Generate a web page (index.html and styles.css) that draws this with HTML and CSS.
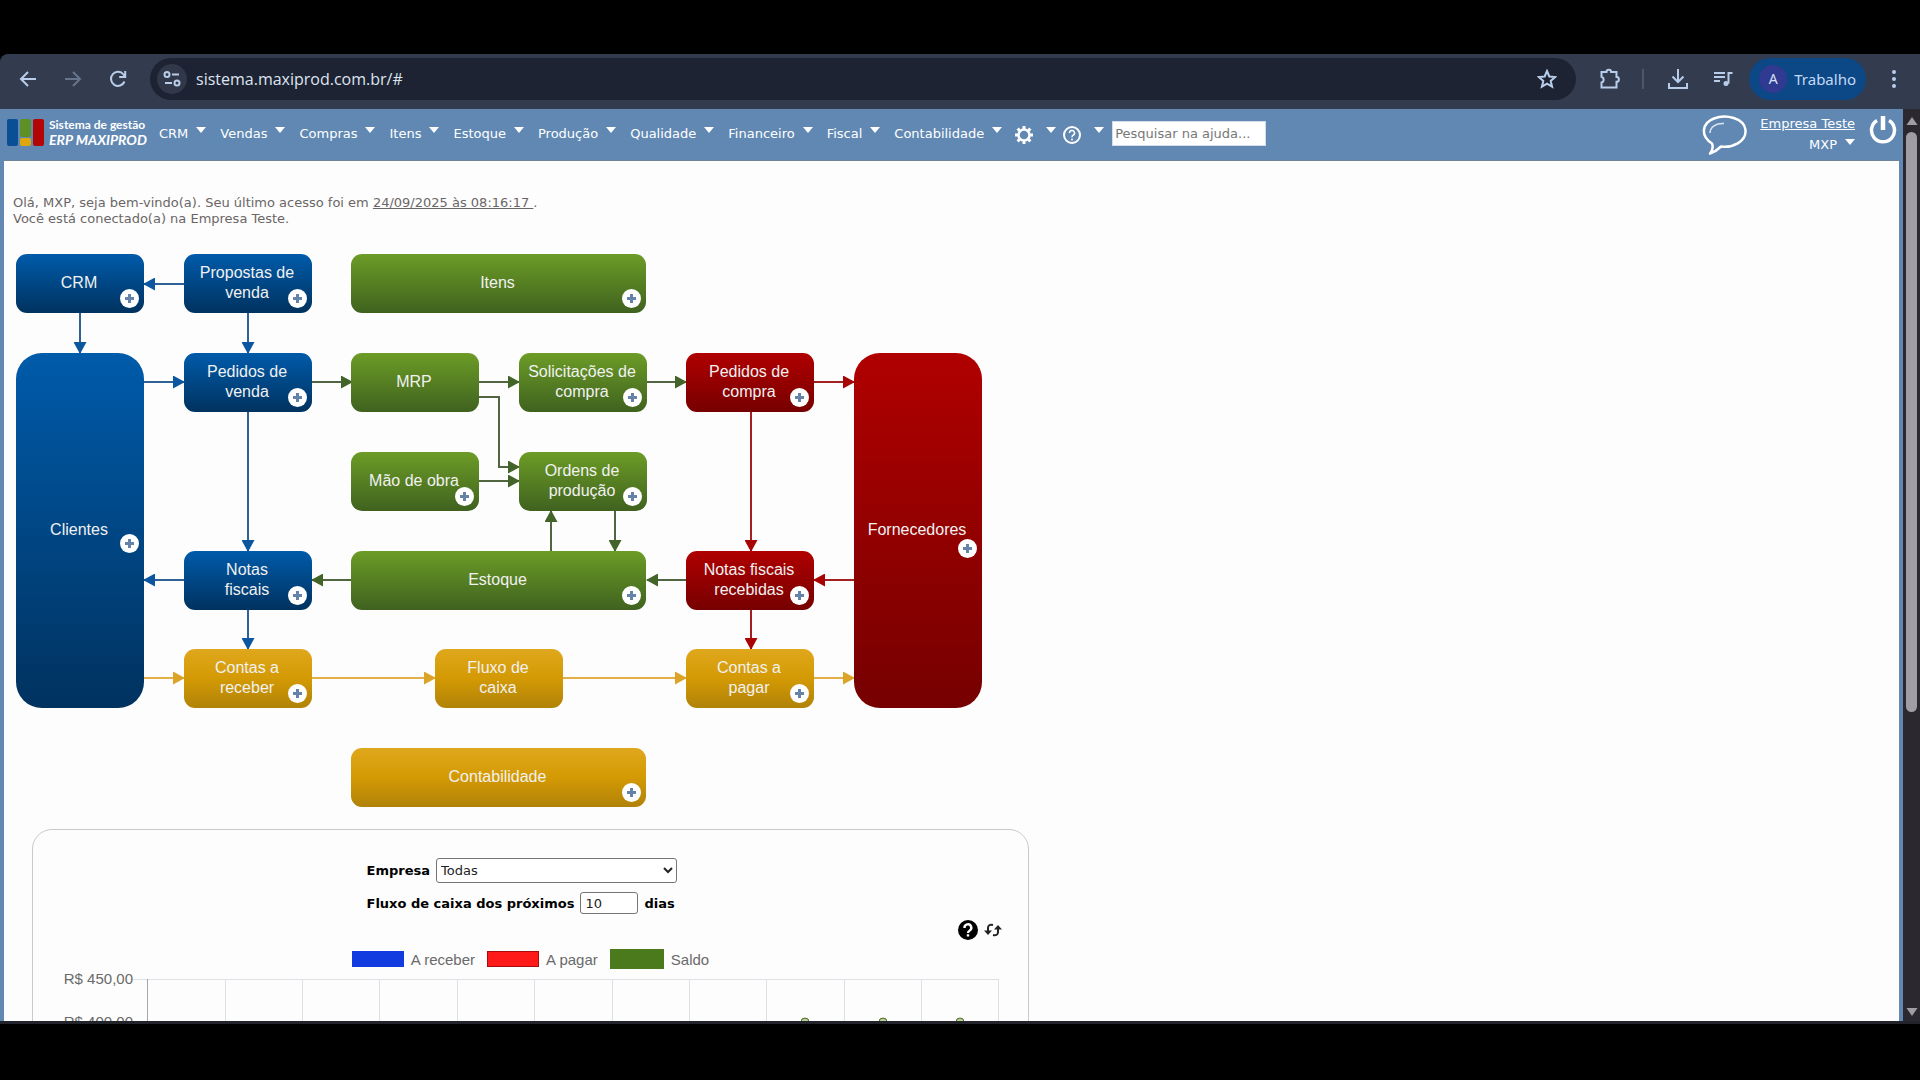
FILE: index.html
```
<!DOCTYPE html>
<html lang="pt-BR">
<head>
  <meta charset="UTF-8" />
  <meta name="viewport" content="width=device-width, initial-scale=1.0"/>
  <title>ERP MAXIPROD</title>
  <link rel="stylesheet" href="styles.css">
</head>
<body>
  <!-- Browser bar -->
  <div class="toolbar">
    <button class="tool" aria-label="Voltar"><svg width="18" height="18" viewBox="0 0 18 18"><path d="M17 9H2M9 2L2 9l7 7"/></svg></button>
    <button class="tool off" aria-label="Avançar"><svg width="18" height="18" viewBox="0 0 18 18"><path d="M1 9h15M9 2l7 7-7 7"/></svg></button>
    <button class="tool" aria-label="Recarregar"><svg width="18" height="18" viewBox="0 0 18 18"><path d="M15.500 11.500A7 7 0 1 1 14.500 4.500L16 6.500M16.200 1v6h-6"/></svg></button>

    <div class="omnibox">
      <button class="site-info" aria-label="Informações do site"><svg width="18" height="18" viewBox="0 0 18 18"><circle cx="4" cy="4.500" r="2.500"/><path d="M9 4.500h7M2 13h7"/><circle cx="14" cy="13" r="2.500"/></svg></button>
      <input type="text" id="address" aria-label="Endereço" value="sistema.maxiprod.com.br/#" />
      <button class="star" aria-label="Favoritos"><svg width="20" height="20" viewBox="0 0 20 20"><path d="M10 2l2.300 5.500 5.900.5-4.500 3.900 1.400 5.800L10 14.600l-5.100 3.100 1.400-5.800L1.800 8l5.900-.5z"/></svg></button>
    </div>

    <button class="tool puzzle" aria-label="Extensões"><svg width="22" height="22" viewBox="0 0 22 22"><path d="M2.500 4H7.500a2.300 2.300 0 0 1 4.600 0H17.500V9a2.400 2.400 0 0 1 0 4.800V19.500H2.500V14.500a2.900 2.900 0 0 0 0-5.600z"/></svg></button>
    <span class="separator"></span>
    <button class="tool" aria-label="Downloads"><svg width="22" height="22" viewBox="0 0 22 22"><path d="M11 1v13M5.500 8.500L11 14l5.500-5.500M2 15v5h18v-5"/></svg></button>
    <button class="tool" aria-label="Mídia"><svg width="20" height="20" viewBox="0 0 20 20"><path d="M1 4h11M1 8h11M1 12h6M19.500 4h-4v10.500"/><circle class="solid" cx="13" cy="14.500" r="2.500"/></svg></button>
    <button class="profile"><span class="avatar">A</span>Trabalho</button>
    <button class="tool" aria-label="Menu"><svg width="6" height="20" viewBox="0 0 6 20"><circle class="dot" cx="3" cy="3" r="2"/><circle class="dot" cx="3" cy="10" r="2"/><circle class="dot" cx="3" cy="17" r="2"/></svg></button>
  </div>

  <div class="viewport">
    <div class="page">
      <header class="header">
        <a class="logo" href="#">
          <svg width="38" height="30" viewBox="0 0 38 30">
            <rect x="0" y="2" width="11" height="27" rx="2" fill="#0a4f96"/>
            <rect x="13" y="2" width="11" height="18" rx="2" fill="#5d9126"/>
            <rect x="13" y="21" width="11" height="8" rx="2" fill="#e0a60e"/>
            <rect x="26" y="2" width="11" height="27" rx="2" fill="#b30505"/>
          </svg>
          <span class="logo-text">Sistema de gestão<em>ERP MAXIPROD</em></span>
        </a>

        <nav class="menu">
          <a href="#">CRM</a>
          <a href="#">Vendas</a>
          <a href="#">Compras</a>
          <a href="#">Itens</a>
          <a href="#">Estoque</a>
          <a href="#">Produção</a>
          <a href="#">Qualidade</a>
          <a href="#">Financeiro</a>
          <a href="#">Fiscal</a>
          <a href="#">Contabilidade</a>
          <a href="#" class="icon-item" aria-label="Configurações"><svg width="20" height="20" viewBox="0 0 20 20"><circle cx="10" cy="10" r="5.500" fill="none" stroke="#fff" stroke-width="2.500"/><path d="M10 1v3M10 16v3M1 10h3M16 10h3M3.600 3.600l2.200 2.200M14.200 14.200l2.200 2.200M3.600 16.400l2.200-2.200M14.200 5.800l2.200-2.200" stroke="#fff" stroke-width="3"/></svg></a>
          <a href="#" class="icon-item" aria-label="Ajuda"><svg width="20" height="20" viewBox="0 0 20 20"><circle cx="10" cy="10" r="8" fill="none" stroke="#fff" stroke-width="2"/><path d="M7.500 8a2.500 2.500 0 1 1 3.700 2.200Q10 10.900 10 12.200M10 13.500v2" fill="none" stroke="#fff" stroke-width="1.500"/></svg></a>
        </nav>
        <input type="text" class="search" aria-label="Pesquisar na ajuda" placeholder="Pesquisar na ajuda..." />

        <div class="user">
          <button class="plain" aria-label="Chat"><svg width="46" height="40" viewBox="0 0 46 40"><path d="M10 28.500C-2 21 0 8 12 3.500 24-1 42 3 43.500 15 44.500 27 30 33 19 31.500Q14 36.500 8 38.500 12 34 10 28.500z" fill="none" stroke="#fff" stroke-width="2.500" stroke-linejoin="round"/><path d="M8 18C8 12 14 8 22 8.500" fill="none" stroke="#dbe6f2" stroke-width="1.500"/></svg></button>
          <div class="account">
            <a class="company" href="#">Empresa Teste</a>
            <a class="login" href="#">MXP</a>
          </div>
          <button class="plain" aria-label="Sair"><svg width="28" height="30" viewBox="0 0 28 30"><path d="M8 5.500A11.500 11.500 0 1 0 20 5.500" fill="none" stroke="#fff" stroke-width="3.500"/><path d="M14 1v14" stroke="#fff" stroke-width="4.500"/></svg></button>
        </div>
      </header>

      <main class="content">
        <p class="welcome">Olá, MXP, seja bem-vindo(a). Seu último acesso foi em <a href="#">24/09/2025 às 08:16:17 </a>.<br>Você está conectado(a) na Empresa Teste.</p>

        <!-- Process flow -->
        <div class="flow">
          <svg class="arrows" width="966" height="553" viewBox="16 254 966 553">
            <defs>
              <marker id="mBlue" markerUnits="userSpaceOnUse" markerWidth="12" markerHeight="13" refX="11" refY="6.500" orient="auto"><path d="M0 0l12 6.500L0 13z" fill="#0c569f"/></marker>
              <marker id="mGreen" markerUnits="userSpaceOnUse" markerWidth="12" markerHeight="13" refX="11" refY="6.500" orient="auto"><path d="M0 0l12 6.500L0 13z" fill="#436428"/></marker>
              <marker id="mRed" markerUnits="userSpaceOnUse" markerWidth="12" markerHeight="13" refX="11" refY="6.500" orient="auto"><path d="M0 0l12 6.500L0 13z" fill="#a80404"/></marker>
              <marker id="mGold" markerUnits="userSpaceOnUse" markerWidth="12" markerHeight="13" refX="11" refY="6.500" orient="auto"><path d="M0 0l12 6.500L0 13z" fill="#dca426"/></marker>
            </defs>
            <g class="a-blue">
              <path d="M184 284H144"/>
              <path d="M80 313V353"/>
              <path d="M248 313V353"/>
              <path d="M144 382H184"/>
              <path d="M248 412V551"/>
              <path d="M184 580H144"/>
              <path d="M248 609V649"/>
            </g>
            <g class="a-green">
              <path d="M312 382H352"/>
              <path d="M479 382H519"/>
              <path d="M479 397H499V467H519"/>
              <path d="M479 481H519"/>
              <path d="M646 382H686"/>
              <path d="M551 551V511"/>
              <path d="M615 511V551"/>
              <path d="M351 580H312"/>
              <path d="M686 580H647"/>
            </g>
            <g class="a-red">
              <path d="M814 382H854"/>
              <path d="M751 412V551"/>
              <path d="M854 580H814"/>
              <path d="M751 609V649"/>
            </g>
            <g class="a-gold">
              <path d="M144 678H184"/>
              <path d="M312 678H435"/>
              <path d="M563 678H686"/>
              <path d="M814 678H854"/>
            </g>
          </svg>

          <div class="node blue c1 r1"><a href="#">CRM</a><button class="plus" aria-label="Abrir CRM"></button></div>
          <div class="node blue c2 r1"><a href="#">Propostas de venda</a><button class="plus" aria-label="Abrir propostas"></button></div>
          <div class="node green wide c3 r1"><a href="#">Itens</a><button class="plus" aria-label="Abrir itens"></button></div>

          <div class="node blue tall c1 r2"><a href="#">Clientes</a><button class="plus" aria-label="Abrir clientes"></button></div>
          <div class="node blue c2 r2"><a href="#">Pedidos de venda</a><button class="plus" aria-label="Abrir pedidos de venda"></button></div>
          <div class="node green c3 r2"><a href="#">MRP</a></div>
          <div class="node green c4 r2"><a href="#">Solicitações de compra</a><button class="plus" aria-label="Abrir solicitações"></button></div>
          <div class="node red c5 r2"><a href="#">Pedidos de compra</a><button class="plus" aria-label="Abrir pedidos de compra"></button></div>
          <div class="node red tall c6 r2"><a href="#">Fornecedores</a><button class="plus low" aria-label="Abrir fornecedores"></button></div>

          <div class="node green c3 r3"><a href="#">Mão de obra</a><button class="plus" aria-label="Abrir mão de obra"></button></div>
          <div class="node green c4 r3"><a href="#">Ordens de<br>produção</a><button class="plus" aria-label="Abrir ordens"></button></div>

          <div class="node blue c2 r4"><a href="#">Notas<br>fiscais</a><button class="plus" aria-label="Abrir notas fiscais"></button></div>
          <div class="node green wide c3 r4"><a href="#">Estoque</a><button class="plus" aria-label="Abrir estoque"></button></div>
          <div class="node red c5 r4"><a href="#">Notas fiscais recebidas</a><button class="plus" aria-label="Abrir notas recebidas"></button></div>

          <div class="node gold c2 r5"><a href="#">Contas a receber</a><button class="plus" aria-label="Abrir contas a receber"></button></div>
          <div class="node gold mid r5"><a href="#">Fluxo de<br>caixa</a></div>
          <div class="node gold c5 r5"><a href="#">Contas a<br>pagar</a><button class="plus" aria-label="Abrir contas a pagar"></button></div>

          <div class="node gold wide c3 r6"><a href="#">Contabilidade</a><button class="plus" aria-label="Abrir contabilidade"></button></div>
        </div>

        <!-- Cash flow chart -->
        <section class="card">
          <form class="filter">
            <div class="form-row">
              <label for="empresa">Empresa</label>
              <select id="empresa" name="empresa"><option>Todas</option></select>
            </div>
            <div class="form-row">
              <label for="dias">Fluxo de caixa dos próximos</label>
              <input type="text" id="dias" name="dias" value="10" />
              <span>dias</span>
            </div>
          </form>

          <div class="actions">
            <button class="plain" aria-label="Ajuda do gráfico"><svg width="20" height="20" viewBox="0 0 20 20"><circle cx="10" cy="10" r="10"/><path d="M6.500 8a3.400 3.400 0 1 1 5 2.700Q10 11.500 10 13M10 14.200v2.300" fill="none" stroke="#fff" stroke-width="2.400"/></svg></button>
            <button class="plain" aria-label="Atualizar"><svg width="18" height="14" viewBox="0 0 18 14"><path d="M9 2Q4 1 4 5v4M9 12q5 1 5-3V5" fill="none" stroke="#222" stroke-width="2"/><path d="M0 7.500h8L4 12zM10 6.500h8L14 2z" fill="#222"/></svg></button>
          </div>

          <div class="legend">
            <span class="key k-receber"></span>A receber
            <span class="key k-pagar"></span>A pagar
            <span class="key k-saldo"></span>Saldo
          </div>

          <div class="chart">
            <div class="axis"><span>R$ 450,00</span><span>R$ 400,00</span></div>
            <svg class="plot" width="866" height="86" viewBox="0 0 866 86">
              <path class="grid" d="M0 .5H866M0 43.500H866M92.500 0V86M169.500 0V86M246.500 0V86M324.500 0V86M401.500 0V86M479.500 0V86M556.500 0V86M633.500 0V86M711.500 0V86M788.500 0V86M865.500 0V86"/>
              <path class="base" d="M14.500 0V86"/>
              <path class="saldo" d="M672 43.500H827"/>
              <g class="points"><circle cx="672" cy="43" r="4"/><circle cx="750" cy="43" r="4"/><circle cx="827" cy="43" r="4"/></g>
            </svg>
          </div>
        </section>
      </main>
    </div>

    <div class="scrollbar">
      <svg width="12" height="10" viewBox="0 0 12 10"><path d="M6 1l5.500 8H.5z"/></svg>
      <div class="track"><div class="thumb"></div></div>
      <svg width="12" height="10" viewBox="0 0 12 10"><path d="M6 9L.5 1h11z"/></svg>
    </div>
  </div>
</body>
</html>
```
FILE: styles.css
```
* { box-sizing: border-box; }
body {
  margin: 0;
  height: 100vh;
  padding: 54px 0 56px;
  background: #000;
  font-family: "DejaVu Sans", Verdana, sans-serif;
  font-size: 13px;
  display: flex;
  flex-direction: column;
  overflow: hidden;
}
button {
  border: none;
  background: none;
  padding: 0;
  font: inherit;
  color: inherit;
  cursor: pointer;
}
svg { display: block; }

/* Browser bar */
.toolbar {
  flex: none;
  height: 55px;
  padding: 4px 4px 9px 5px;
  background: #333c4f;
  display: flex;
  align-items: center;
  border-radius: 8px 0 0 0;
  color: #b9cdea;
}
.tool {
  width: 45px;
  height: 42px;
  display: flex;
  align-items: center;
  justify-content: center;
}
.toolbar svg {
  fill: none;
  stroke: #b9cdea;
  stroke-width: 2;
}
.toolbar .solid, .toolbar .dot { fill: #b9cdea; stroke: none; }
.toolbar .off svg { stroke: #66758c; }
.omnibox {
  flex: 1;
  height: 42px;
  margin: 0 11px 0 10px;
  padding: 0 19px 0 7px;
  background: #1d2333;
  border-radius: 21px;
  display: flex;
  align-items: center;
}
.site-info {
  width: 30px;
  height: 30px;
  border-radius: 50%;
  background: #303849;
  display: flex;
  align-items: center;
  justify-content: center;
}
.omnibox input {
  flex: 1;
  margin-left: 9px;
  padding: 0;
  border: none;
  outline: none;
  background: transparent;
  color: #dde3ee;
  font: 16px "Open Sans", sans-serif;
}
.separator {
  width: 2px;
  height: 20px;
  margin: 0 11px 0 10px;
  background: #4a576d;
}
.profile {
  height: 42px;
  margin: 0 5px 0 4px;
  padding: 0 10px;
  border-radius: 21px;
  background: #0c4786;
  color: #c3d9f6;
  font: 15px "Noto Sans", sans-serif;
  display: flex;
  align-items: center;
  gap: 7px;
}
.avatar {
  width: 28px;
  height: 28px;
  border-radius: 50%;
  background: #2f3a90;
  color: #d8e2f5;
  font-size: 14px;
  line-height: 28px;
}

.viewport {
  flex: 1;
  min-height: 0;
  display: flex;
  border-bottom: 3px solid #23232b;
}
.page {
  flex: 1;
  overflow: hidden;
  background: #6088b3;
}

/* Header */
.header {
  height: 51px;
  padding: 0 6px 0 7px;
  display: flex;
  align-items: flex-start;
  color: #fff;
}
.header a { color: #fff; text-decoration: none; }
.logo {
  display: flex;
  gap: 4px;
  margin-top: 8px;
  width: 152px;
}
.logo-text {
  font: bold 12px/15px Lato, sans-serif;
  white-space: nowrap;
}
.logo-text em { display: block; font-size: 14px; }
.menu { display: flex; height: 49px; align-items: center; }
.menu a { display: flex; align-items: center; margin-right: 14px; }
.menu a::after, .login::after {
  content: "";
  margin: 0 0 7px 8px;
  border: 5px solid transparent;
  border-top: 6px solid #fff;
  border-bottom: none;
}
.menu .icon-item { margin: 0 8px 0 -2px; }
.menu .icon-item::after { margin-left: 12px; }
.menu .icon-item svg { margin-top: 3px; }
.search {
  width: 154px;
  height: 25px;
  margin-top: 12px;
  padding: 1px 2px;
  border: 1px solid #d5dde8;
  background: #fff;
  font: 13px "DejaVu Sans", sans-serif;
}
.search::placeholder { color: #777; }
.user { margin-left: auto; display: flex; align-items: flex-start; }
.user .plain { margin-top: 6px; }
.account {
  margin: 6px 14px 0 12px;
  display: flex;
  flex-direction: column;
  align-items: flex-end;
  line-height: 18px;
}
.header .company { text-decoration: underline; }
.login { display: flex; align-items: center; margin-top: 3px; }

/* Content */
.content {
  margin: 0 4px;
  min-height: 100%;
  padding: 34px 0 0;
  background: #fdfdfd;
  border-top: 1px solid #6f8296;
}
.welcome {
  margin: 0 0 27px 9px;
  line-height: 16px;
  color: #6b6666;
}
.welcome a { color: inherit; white-space: pre; }

.flow {
  position: relative;
  width: 966px;
  height: 553px;
  margin-left: 12px;
}
.arrows { position: absolute; left: 0; top: 0; }
.arrows g { fill: none; stroke-width: 2; }
.a-blue { stroke: #2f6097; }
.a-green { stroke: #4f6640; }
.a-red { stroke: #a32020; }
.a-gold { stroke: #e2ae48; }
.a-blue path { marker-end: url(#mBlue); }
.a-green path { marker-end: url(#mGreen); }
.a-red path { marker-end: url(#mRed); }
.a-gold path { marker-end: url(#mGold); }

.node {
  position: absolute;
  width: 128px;
  height: 59px;
  padding: 0 15px 2px 13px;
  border-radius: 11px;
  display: flex;
  align-items: center;
  justify-content: center;
  text-align: center;
  font: 16px/20px "Liberation Sans", Arial, sans-serif;
}
.node a { color: #f1f1f1; text-decoration: none; }
.c1 { left: 0; }
.c2 { left: 168px; }
.c3 { left: 335px; }
.c4 { left: 503px; padding: 0 5px 2px 3px; }
.c5 { left: 670px; }
.c6 { left: 838px; }
.mid { left: 419px; }
.r1 { top: 0; }
.r2 { top: 99px; }
.r3 { top: 198px; }
.r4 { top: 297px; }
.r5 { top: 395px; }
.r6 { top: 494px; }
.wide { width: 295px; }
.tall { height: 355px; border-radius: 26px; }
.blue { background: linear-gradient(#005baa, #00325f); }
.green { background: linear-gradient(#6c9c26, #3f621f); }
.red { background: linear-gradient(#b00000, #760000); }
.gold { background: linear-gradient(#dfa71c, #d49a04 50%, #b08208); }

.plus {
  position: absolute;
  right: 5px;
  bottom: 5px;
  width: 19px;
  height: 19px;
  border-radius: 50%;
  background:
    linear-gradient(#6583a8, #6583a8) center / 9px 3px no-repeat,
    linear-gradient(#6583a8, #6583a8) center / 3px 9px no-repeat,
    #fff;
}
.tall .plus { bottom: 155px; }
.tall .plus.low { bottom: 150px; }

/* Chart card */
.card {
  width: 997px;
  height: 600px;
  margin: 22px 0 0 28px;
  padding-top: 28px;
  border: 1px solid #c9c9cf;
  border-radius: 20px;
}
.filter {
  width: 328px;
  margin: 0 auto;
  font-weight: bold;
}
.form-row {
  display: flex;
  align-items: center;
  gap: 6px;
  margin-bottom: 9px;
  white-space: nowrap;
}
.form-row + .form-row { margin-bottom: 6px; }
.form-row select, .form-row input {
  border: 1px solid #767676;
  border-radius: 3px;
  background: #fff;
  color: #222;
  font: 13px "DejaVu Sans", sans-serif;
}
.form-row select { width: 241px; height: 25px; }
.form-row input { width: 58px; height: 22px; padding: 1px 4px; }
.actions {
  display: flex;
  align-items: center;
  justify-content: flex-end;
  gap: 6px;
  margin-right: 26px;
}
.legend {
  display: flex;
  justify-content: center;
  align-items: center;
  margin-top: 9px;
  height: 20px;
  font: 15px "Liberation Sans", Arial, sans-serif;
  color: #6a6a6a;
}
.key {
  width: 52px;
  height: 16px;
  margin: 0 7px 0 12px;
}
.key:first-child { margin-left: 0; }
.k-receber { background: #123be0; }
.k-pagar { background: #ff1a1a; border: 1px solid #a80c0c; }
.k-saldo { background: #4a7a1c; width: 54px; height: 20px; }
.chart { display: flex; margin-top: 10px; }
.axis {
  width: 100px;
  margin-top: -10px;
  text-align: right;
  font: 15px/20px "Liberation Sans", Arial, sans-serif;
  color: #6a6a6a;
}
.axis span { display: block; margin-bottom: 23px; }
.plot { overflow: visible; }
.grid { stroke: #dfdfe6; }
.base { stroke: #a5a5aa; }
.saldo { stroke: #8a9a78; }
.points { fill: #b9cf95; stroke: #4d6b2c; }

/* Scrollbar */
.scrollbar {
  width: 17px;
  padding: 7px 0 4px;
  background: #2b292f;
  display: flex;
  flex-direction: column;
  align-items: center;
}
.scrollbar path { fill: #a09ea3; }
.track { flex: 1; padding: 6px 0 10px; }
.thumb {
  width: 11px;
  height: 67%;
  border-radius: 6px;
  background: #a09ea3;
}
```
